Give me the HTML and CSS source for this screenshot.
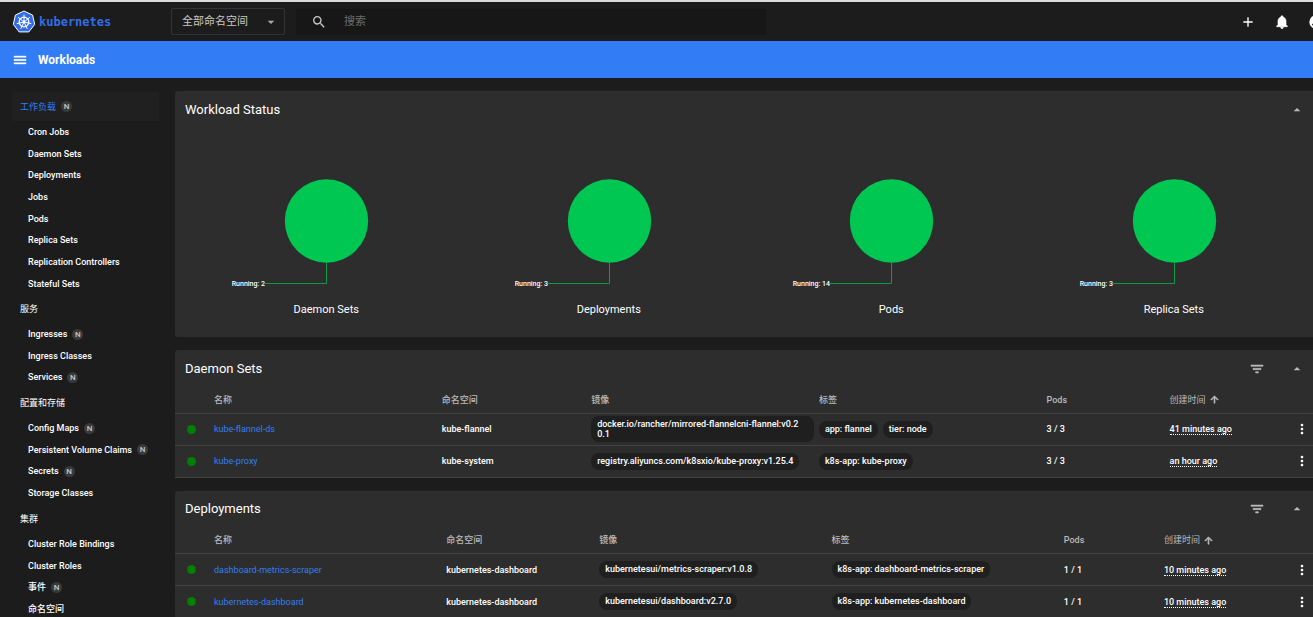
FILE: index.html
```html
<!DOCTYPE html>
<html lang="zh-CN">
<head>
<meta charset="utf-8">
<title>Kubernetes Dashboard</title>
<link rel="stylesheet" href="styles.css">
</head>
<body>
<svg class="defs" aria-hidden="true">
  <symbol id="up" viewBox="0 0 24 24"><path d="M7 14l5-5 5 5z"/></symbol>
  <symbol id="down" viewBox="0 0 24 24"><path d="M7 10l5 5 5-5z"/></symbol>
  <symbol id="filter" viewBox="0 0 24 24"><path d="M10 18h4v-2h-4v2zM3 6v2h18V6H3zm3 7h12v-2H6v2z" stroke="currentColor" stroke-width=".8"/></symbol>
  <symbol id="more" viewBox="0 0 24 24"><path d="M12 8c1.100 0 2-.9 2-2s-.9-2-2-2-2 .9-2 2 .9 2 2 2zm0 2c-1.100 0-2 .9-2 2s.9 2 2 2 2-.9 2-2-.9-2-2-2zm0 6c-1.100 0-2 .9-2 2s.9 2 2 2 2-.9 2-2-.9-2-2-2z"/></symbol>
  <symbol id="arrow" viewBox="0 0 24 24"><path d="M4 12l1.410 1.410L11 7.830V20h2V7.830l5.580 5.590L20 12l-8-8-8 8z" stroke="currentColor" stroke-width="1.500"/></symbol>
</svg>
<div class="app">
  <header class="topbar">
    <a class="logo" href="#">
      <svg class="logo-mark" viewBox="0 0 24 24" aria-hidden="true">
        <path class="logo-edge" d="M12 1l8.600 4.100 2.100 9.300-5.900 7.500H7.200L1.300 14.400 3.400 5.100z"/>
        <g fill="none" stroke="#fff">
          <circle cx="12" cy="12" r="4.800" stroke-width="1.300"/>
          <path stroke-width="1" d="M12 12V4.500M12 12l5.900-4.700M12 12l7.300 1.700M12 12l3.300 6.800M12 12l-3.300 6.800M12 12l-7.300 1.700M12 12L6.100 7.300"/>
        </g>
        <circle cx="12" cy="12" r="1.400" fill="#fff"/>
      </svg>
      <span>kubernetes</span>
    </a>
    <div class="ns">
      <select aria-label="命名空间"><option>全部命名空间</option></select>
      <svg class="icon ns-arrow" aria-hidden="true"><use href="#down"/></svg>
    </div>
    <label class="search">
      <svg class="icon" viewBox="0 0 24 24" aria-hidden="true"><path d="M15.500 14h-.79l-.28-.27A6.471 6.471 0 0 0 16 9.500 6.500 6.500 0 1 0 9.500 16c1.610 0 3.090-.59 4.230-1.570l.27.28v.79l5 4.990L20.490 19l-4.990-5zm-6 0C7.010 14 5 11.990 5 9.500S7.010 5 9.500 5 14 7.010 14 9.500 11.990 14 9.500 14z"/></svg>
      <input type="search" placeholder="搜索" aria-label="搜索">
    </label>
    <div class="actions">
      <button aria-label="新建"><svg class="icon" viewBox="0 0 24 24"><path d="M19 13h-6v6h-2v-6H5v-2h6V5h2v6h6v2z"/></svg></button>
      <button aria-label="通知"><svg class="icon" viewBox="0 0 24 24"><path d="M12 22c1.100 0 2-.9 2-2h-4c0 1.100.89 2 2 2zm6-6v-5c0-3.070-1.640-5.640-4.500-6.320V4c0-.83-.67-1.500-1.500-1.500s-1.500.67-1.500 1.500v.68C7.630 5.360 6 7.920 6 11v5l-2 2v1h16v-1l-2-2z" stroke="currentColor" stroke-width="1"/></svg></button>
      <button aria-label="用户"><svg class="icon" viewBox="0 0 24 24"><path d="M12 2a10 10 0 1 0 0 20 10 10 0 0 0 0-20zm0 3a3 3 0 1 1 0 6 3 3 0 0 1 0-6zm0 14.200c-2.500 0-4.710-1.280-6-3.220.03-1.990 4-3.080 6-3.080s5.970 1.090 6 3.080a7.200 7.200 0 0 1-6 3.220z"/></svg></button>
    </div>
  </header>

  <div class="crumbs">
    <button aria-label="菜单"><svg class="icon" viewBox="0 0 24 24"><path d="M3 18h18v-2H3v2zm0-5h18v-2H3v2zm0-7v2h18V6H3z" stroke="currentColor" stroke-width=".6"/></svg></button>
    <h1>Workloads</h1>
  </div>

  <div class="body">
    <nav class="side">
      <a class="group active" href="#">工作负载<i>N</i></a>
      <ul>
        <li><a href="#">Cron Jobs</a></li>
        <li><a href="#">Daemon Sets</a></li>
        <li><a href="#">Deployments</a></li>
        <li><a href="#">Jobs</a></li>
        <li><a href="#">Pods</a></li>
        <li><a href="#">Replica Sets</a></li>
        <li><a href="#">Replication Controllers</a></li>
        <li><a href="#">Stateful Sets</a></li>
      </ul>
      <a class="group" href="#">服务</a>
      <ul>
        <li><a href="#">Ingresses<i>N</i></a></li>
        <li><a href="#">Ingress Classes</a></li>
        <li><a href="#">Services<i>N</i></a></li>
      </ul>
      <a class="group" href="#">配置和存储</a>
      <ul>
        <li><a href="#">Config Maps<i>N</i></a></li>
        <li><a href="#">Persistent Volume Claims<i>N</i></a></li>
        <li><a href="#">Secrets<i>N</i></a></li>
        <li><a href="#">Storage Classes</a></li>
      </ul>
      <a class="group" href="#">集群</a>
      <ul>
        <li><a href="#">Cluster Role Bindings</a></li>
        <li><a href="#">Cluster Roles</a></li>
        <li><a href="#">事件<i>N</i></a></li>
        <li><a href="#">命名空间</a></li>
      </ul>
    </nav>

    <main class="content">
      <section class="card">
        <div class="card-head">
          <h2>Workload Status</h2>
          <button aria-label="收起"><svg class="icon"><use href="#up"/></svg></button>
        </div>
        <div class="charts">
          <figure>
            <svg class="chart" viewBox="0 0 200 110"><circle cx="100.500" cy="42" r="41.700"/><path d="M100.500 84v20.500H39"/><text x="39" y="107">Running: 2</text></svg>
            <figcaption>Daemon Sets</figcaption>
          </figure>
          <figure>
            <svg class="chart" viewBox="0 0 200 110"><circle cx="100.500" cy="42" r="41.700"/><path d="M100.500 84v20.500H39"/><text x="39" y="107">Running: 3</text></svg>
            <figcaption>Deployments</figcaption>
          </figure>
          <figure>
            <svg class="chart" viewBox="0 0 200 110"><circle cx="100.500" cy="42" r="41.700"/><path d="M100.500 84v20.500H39"/><text x="39" y="107">Running: 14</text></svg>
            <figcaption>Pods</figcaption>
          </figure>
          <figure>
            <svg class="chart" viewBox="0 0 200 110"><circle cx="100.500" cy="42" r="41.700"/><path d="M100.500 84v20.500H39"/><text x="39" y="107">Running: 3</text></svg>
            <figcaption>Replica Sets</figcaption>
          </figure>
        </div>
      </section>

      <section class="card">
        <div class="card-head">
          <h2>Daemon Sets</h2>
          <button aria-label="筛选"><svg class="icon"><use href="#filter"/></svg></button>
          <button aria-label="收起"><svg class="icon"><use href="#up"/></svg></button>
        </div>
        <table class="daemon">
          <colgroup><col class="c-status"><col class="c-name"><col class="c-ns"><col class="c-img"><col class="c-label"><col class="c-pods"><col><col class="c-menu"></colgroup>
          <thead>
            <tr><th></th><th>名称</th><th>命名空间</th><th>镜像</th><th>标签</th><th>Pods</th><th><span class="sort">创建时间<svg aria-hidden="true"><use href="#arrow"/></svg></span></th><th></th></tr>
          </thead>
          <tbody>
            <tr>
              <td><span class="dot"></span></td><td><a href="#">kube-flannel-ds</a></td><td>kube-flannel</td>
              <td><span class="chip multiline">docker.io/rancher/mirrored-flannelcni-flannel:v0.2<br>0.1</span></td>
              <td><div class="chips"><span class="chip">app: flannel</span><span class="chip">tier: node</span></div></td>
              <td>3 / 3</td><td><span class="age">41 minutes ago</span></td>
              <td><button aria-label="更多"><svg class="icon"><use href="#more"/></svg></button></td>
            </tr>
            <tr>
              <td><span class="dot"></span></td><td><a href="#">kube-proxy</a></td><td>kube-system</td>
              <td><span class="chip">registry.aliyuncs.com/k8sxio/kube-proxy:v1.25.4</span></td>
              <td><div class="chips"><span class="chip">k8s-app: kube-proxy</span></div></td>
              <td>3 / 3</td><td><span class="age">an hour ago</span></td>
              <td><button aria-label="更多"><svg class="icon"><use href="#more"/></svg></button></td>
            </tr>
          </tbody>
        </table>
      </section>

      <section class="card">
        <div class="card-head">
          <h2>Deployments</h2>
          <button aria-label="筛选"><svg class="icon"><use href="#filter"/></svg></button>
          <button aria-label="收起"><svg class="icon"><use href="#up"/></svg></button>
        </div>
        <table class="deploy">
          <colgroup><col class="c-status"><col class="c-name"><col class="c-ns"><col class="c-img"><col class="c-label"><col class="c-pods"><col><col class="c-menu"></colgroup>
          <thead>
            <tr><th></th><th>名称</th><th>命名空间</th><th>镜像</th><th>标签</th><th>Pods</th><th><span class="sort">创建时间<svg aria-hidden="true"><use href="#arrow"/></svg></span></th><th></th></tr>
          </thead>
          <tbody>
            <tr>
              <td><span class="dot"></span></td><td><a href="#">dashboard-metrics-scraper</a></td><td>kubernetes-dashboard</td>
              <td><span class="chip">kubernetesui/metrics-scraper:v1.0.8</span></td>
              <td><div class="chips"><span class="chip">k8s-app: dashboard-metrics-scraper</span></div></td>
              <td>1 / 1</td><td><span class="age">10 minutes ago</span></td>
              <td><button aria-label="更多"><svg class="icon"><use href="#more"/></svg></button></td>
            </tr>
            <tr>
              <td><span class="dot"></span></td><td><a href="#">kubernetes-dashboard</a></td><td>kubernetes-dashboard</td>
              <td><span class="chip">kubernetesui/dashboard:v2.7.0</span></td>
              <td><div class="chips"><span class="chip">k8s-app: kubernetes-dashboard</span></div></td>
              <td>1 / 1</td><td><span class="age">10 minutes ago</span></td>
              <td><button aria-label="更多"><svg class="icon"><use href="#more"/></svg></button></td>
            </tr>
          </tbody>
        </table>
      </section>
    </main>
  </div>
</div>
</body>
</html>
```

FILE: styles.css
```css
* { box-sizing: border-box; }

html, body { height: 100%; }

body {
  margin: 0;
  overflow: hidden;
  background: #1c1c1c;
  color: #fff;
  font: 500 9px/12px Roboto, "Noto Sans CJK SC", sans-serif;
}

h1, h2, ul, figure { margin: 0; padding: 0; }
ul { list-style: none; }
a { color: inherit; text-decoration: none; }

button {
  display: flex;
  padding: 0;
  border: 0;
  background: none;
  color: inherit;
}

.defs { display: none; }

.icon {
  display: block;
  width: 16px;
  height: 16px;
  fill: currentColor;
}

.app {
  width: calc(100% + 25px);
  border-top: 2px solid #dcdcdc;
}

.topbar {
  display: flex;
  align-items: center;
  height: 39px;
  padding: 0 14px 0 12px;
}

.logo {
  display: flex;
  align-items: center;
  gap: 3px;
  width: 159px;
  color: #326de6;
  font: 700 12px/16px "DejaVu Sans Mono", monospace;
}

.logo-mark { width: 24px; height: 24px; }
.logo-edge { fill: #326de6; stroke: #fff; stroke-width: 1; }

.ns {
  display: grid;
  align-items: center;
  width: 114px;
  height: 27px;
  margin-right: 11px;
}

.ns > * { grid-area: 1 / 1; }

.ns select {
  width: 100%;
  height: 100%;
  padding: 0 10px;
  appearance: none;
  border: 1px solid #333;
  border-radius: 2px;
  background: transparent;
  color: #c8c8c8;
  font: 400 11px/16px Roboto, "Noto Sans CJK SC", sans-serif;
}

.ns-arrow {
  justify-self: end;
  margin-right: 6px;
  color: #aaa;
  pointer-events: none;
}

.search {
  display: flex;
  align-items: center;
  gap: 17px;
  width: 470px;
  height: 26px;
  padding-left: 15px;
  background: #171717;
  color: #c8c8c8;
}

.search input {
  flex: 1;
  min-width: 0;
  padding: 0;
  border: 0;
  outline: 0;
  background: none;
  color: #fff;
  font: 400 11px/16px Roboto, "Noto Sans CJK SC", sans-serif;
}

.search input::placeholder { color: #6c6c6c; }

.actions { display: flex; gap: 18px; margin-left: auto; }

.crumbs {
  display: flex;
  align-items: center;
  gap: 10px;
  height: 37px;
  padding: 0 12px;
  background: #327df5;
}

.crumbs h1 { font-size: 12px; font-weight: 700; line-height: 16px; }

.body { display: flex; padding: 13px 13px 13px 12px; }

.side { flex: none; width: 147px; margin-right: 16px; padding-top: 1px; }

.side .group {
  display: flex;
  align-items: center;
  height: 29px;
  padding-left: 8px;
  font-weight: 400;
}

.side .active { background: #202020; color: #327df5; }
.side li { height: 22px; padding-left: 16px; }
.side li:nth-child(3n + 2) { height: 21px; }
.side li a { display: flex; align-items: center; height: 100%; }

.side i {
  width: 11px;
  height: 11px;
  margin-left: 5px;
  border-radius: 50%;
  background: #3a3a3a;
  color: #c8c8c8;
  font-size: 8px;
  font-style: normal;
  font-weight: 500;
  line-height: 11px;
  text-align: center;
}

.content {
  display: flex;
  flex: 1;
  flex-direction: column;
  gap: 13px;
  min-width: 0;
}

.card { border-radius: 3px; background: #2d2d2d; }

.card-head {
  display: flex;
  align-items: center;
  gap: 24px;
  height: 37px;
  padding: 0 20px 0 10px;
  color: #bbb;
}

.card-head h2 {
  flex: 1;
  color: #fff;
  font-size: 13px;
  font-weight: 400;
  line-height: 16px;
}

.charts {
  display: grid;
  grid-template-columns: repeat(4, 1fr);
  padding: 51px 10px 19px;
}

.charts figure { display: flex; flex-direction: column; align-items: center; gap: 13px; }
.chart { width: 200px; height: 110px; }
.chart circle { fill: #00c752; }
.chart path { fill: none; stroke: #0b9a46; }
.chart text { fill: #fff; font-size: 7px; text-anchor: end; }
figcaption { font-size: 11px; font-weight: 400; line-height: 16px; }

table { width: 100%; border-collapse: collapse; table-layout: fixed; }
.c-status { width: 39px; }
.c-menu { width: 31px; }
.daemon .c-name, .daemon .c-img, .daemon .c-label { width: 19.8%; }
.daemon .c-ns { width: 13%; }
.daemon .c-pods { width: 10.7%; }
.deploy .c-name, .deploy .c-img, .deploy .c-label { width: 20.2%; }
.deploy .c-ns { width: 13.3%; }
.deploy .c-pods { width: 8.7%; }

th, td { padding: 0; text-align: left; }

th {
  height: 26px;
  border-bottom: 1px solid #414141;
  color: #bbb;
  font-weight: 500;
}

td { height: 32px; border-bottom: 1px solid #414141; }
td a { color: #327df5; font-weight: 400; }

.dot {
  display: block;
  width: 9px;
  height: 9px;
  margin-left: 12px;
  border-radius: 50%;
  background: #008000;
}

.chips { display: flex; gap: 5px; }

.chip {
  display: inline-block;
  padding: 3px 6px 4px;
  border-radius: 8px;
  background: #1f1f1f;
  line-height: 10px;
  vertical-align: middle;
  word-break: break-all;
}

.multiline { display: block; margin-right: 5px; padding: 3px 6px; }
.sort { display: inline-flex; align-items: center; gap: 3px; font-weight: 400; }
.sort svg { width: 11px; height: 11px; fill: currentColor; }
.age { border-bottom: 1px dotted #fff; line-height: 10px; }
```
